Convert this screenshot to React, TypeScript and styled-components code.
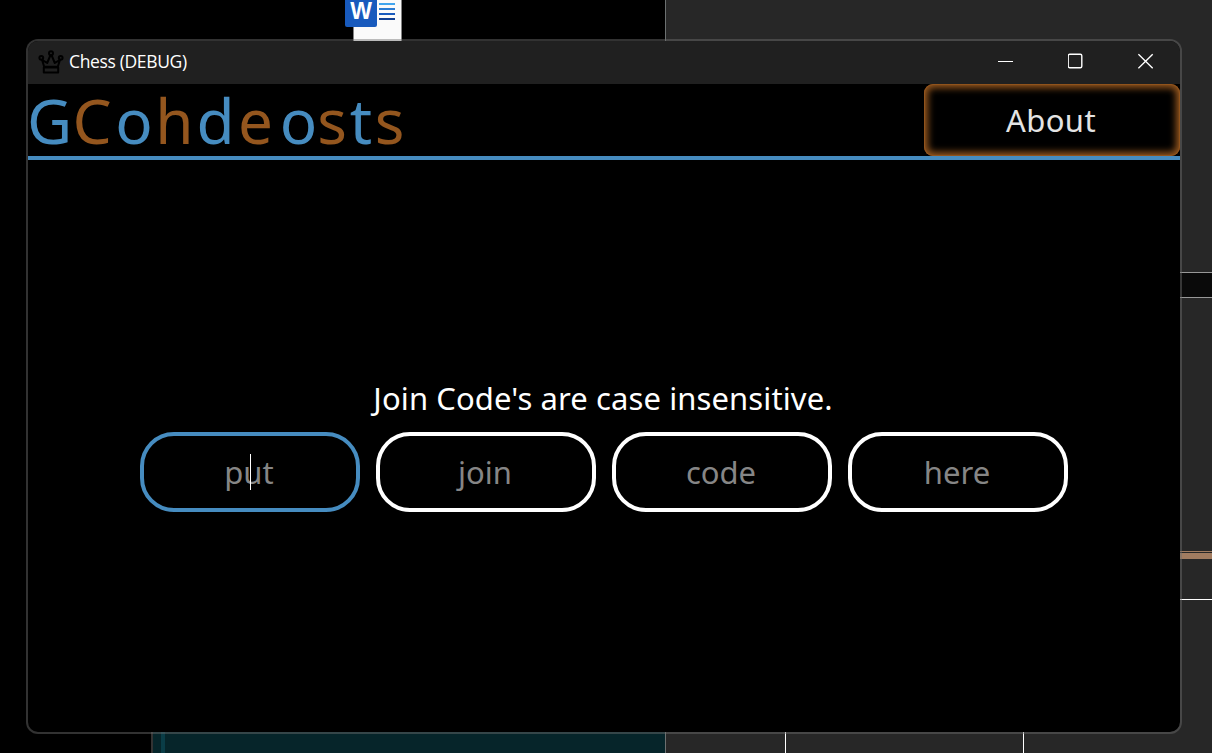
import React from 'react';
import styled, { createGlobalStyle } from 'styled-components';

const BLUE = '#468cc0';
const BROWN = '#94561e';

const Global = createGlobalStyle`
  * { box-sizing: border-box; }
  body { margin: 0; background: #000; overflow: hidden; }
`;

const Desktop = styled.div`
  position: relative;
  display: flex;
  width: 1212px;
  height: 753px;
  background: #000;
  overflow: hidden;
`;

const LeftScreen = styled.div`
  display: flex;
  flex-direction: column;
  justify-content: space-between;
  width: 665px;
`;

const WordFile = styled.svg`
  display: block;
  margin-left: 345px;
`;

const TealPanel = styled.div`
  display: flex;
  height: 24px;
  margin-left: 151px;
  padding-left: 8px;
  border-left: 2px solid #333;
  background: #06252a;
`;

const TealStripe = styled.div`
  width: 4px;
  background: #0a3d47;
`;

const RightScreen = styled.div`
  flex: 1;
  display: flex;
  flex-direction: column;
  background: #272727;
  border-left: 1px solid #6c7070;
`;

const Spacer = styled.div<{ $h: number }>`
  height: ${(p) => p.$h}px;
`;

const DarkBand = styled.div`
  height: 26px;
  background: #0a0a0a;
  border-top: 1px solid #989898;
  border-bottom: 1px solid #989898;
`;

const Rule = styled.div<{ $h: number; $color: string }>`
  height: ${(p) => p.$h}px;
  background: ${(p) => p.$color};
`;

const Columns = styled.div`
  flex: 1;
  display: grid;
  grid-template-columns: 120px 238px 1fr;
`;

const Column = styled.div<{ $line?: boolean }>`
  border-right: ${(p) => (p.$line ? '1px solid #fff' : 'none')};
`;

const Window = styled.main`
  position: absolute;
  left: 26px;
  top: 39px;
  width: 1156px;
  height: 695px;
  display: flex;
  flex-direction: column;
  border: 2px solid rgba(110, 110, 110, 0.45);
  border-radius: 12px;
  background: #000;
  background-clip: padding-box;
  overflow: hidden;
`;

const TitleBar = styled.div`
  display: flex;
  align-items: center;
  height: 43px;
  padding: 0 0 3px 10px;
  background: #202020;
`;

const CrownIcon = styled.svg`
  margin-top: 2px;
`;

const Title = styled.span`
  flex: 1;
  margin-left: 5px;
  color: #fff;
  font: 17.5px/24px 'Open Sans', sans-serif;
  letter-spacing: -0.35px;
  white-space: nowrap;
`;

const Controls = styled.div`
  display: flex;
  gap: 54px;
  margin-right: 26px;
`;

const Header = styled.header`
  display: flex;
  justify-content: space-between;
  height: 76px;
  border-bottom: 4px solid ${BLUE};
`;

const Logo = styled.div`
  display: flex;
  font: 62px/72px 'Noto Sans', sans-serif;
`;

const Letter = styled.span<{ $w: number; $alt: boolean }>`
  display: flex;
  justify-content: center;
  width: ${(p) => p.$w}px;
  color: ${(p) => (p.$alt ? BROWN : BLUE)};
`;

const AboutButton = styled.button`
  width: 256px;
  height: 72px;
  padding: 0 2px 0 0;
  border: 0;
  border-radius: 9px;
  background: #000;
  box-shadow: inset 0 0 7px 4px ${BROWN}, inset 0 0 1px 1px ${BROWN};
  color: #e4e4e4;
  font: 31px/72px 'Noto Sans', sans-serif;
  letter-spacing: 0.4px;
`;

const Body = styled.section`
  flex: 1;
  display: flex;
  flex-direction: column;
  align-items: flex-start;
  padding: 215px 0 0 112px;
`;

const Hint = styled.div`
  width: 926px;
  height: 57px;
  color: #fff;
  text-align: center;
  font: 31px/46px 'Noto Sans', sans-serif;
  letter-spacing: 0.1px;
  white-space: nowrap;
`;

const Fields = styled.div`
  display: flex;
  gap: 16px;
`;

const Field = styled.div<{ $active?: boolean }>`
  position: relative;
  display: flex;
  justify-content: center;
  width: 220px;
  height: 80px;
  padding-right: 2px;
  border: 4px solid ${(p) => (p.$active ? BLUE : '#fff')};
  border-radius: 34px;
  color: #868686;
  font: 31px/73px 'Noto Sans', sans-serif;
`;

const Caret = styled.i`
  position: absolute;
  left: 106px;
  top: 18px;
  width: 1px;
  height: 36px;
  background: #fff;
`;

const letters: [string, number][] = [
  ['G', 41], ['C', 44], ['o', 40], ['h', 41], ['d', 41],
  ['e', 39], ['o', 47], ['s', 20], ['t', 38], ['s', 19],
];

const LogoInset = styled.div`
  padding-left: 1px;
`;

const words = ['put', 'join', 'code', 'here'];

const WordIcon = () => (
  <WordFile width="57" height="42" viewBox="0 0 57 42">
    <rect x="8.5" y="-5" width="48" height="50" fill="#fafafa" stroke="#888" strokeWidth="0.6" />
    <rect x="34" y="3" width="16" height="2" fill="#41a5ee" />
    <rect x="34" y="8" width="16" height="2" fill="#2b7cd3" />
    <rect x="34" y="13" width="16" height="2" fill="#185abd" />
    <rect x="34" y="18" width="16" height="2" fill="#103f91" />
    <rect x="0" y="-6" width="32" height="33" rx="2" fill="#185abd" />
    <text x="16" y="19" textAnchor="middle" fill="#fff" fontFamily="Liberation Sans, sans-serif" fontWeight="700" fontSize="23">W</text>
  </WordFile>
);

const Crown = () => (
  <CrownIcon width="26" height="26" viewBox="0 0 26 26" fill="none" stroke="#000" strokeWidth="2" strokeLinejoin="round">
    <circle cx="3.3" cy="8.8" r="1.9" />
    <circle cx="13" cy="4.3" r="2" />
    <circle cx="22.7" cy="8.8" r="1.9" />
    <path d="M4 10.8 6.2 17.8H19.8L22 10.8 16.8 14 13.7 6.5H12.3L9.2 14Z" />
    <path d="M5.8 18.6H20.2V23.4H5.8Z" />
  </CrownIcon>
);

export default function App() {
  return (
    <>
      <Global />
      <Desktop>
        <LeftScreen>
          <WordIcon />
          <TealPanel><TealStripe /></TealPanel>
        </LeftScreen>
        <RightScreen>
          <Spacer $h={272} />
          <DarkBand />
          <Spacer $h={253} />
          <Rule $h={1} $color="#a27c60" />
          <Spacer $h={1} />
          <Rule $h={6} $color="#a27c60" />
          <Spacer $h={40} />
          <Rule $h={1} $color="#fff" />
          <Columns>
            <Column $line />
            <Column $line />
            <Column />
          </Columns>
        </RightScreen>
        <Window>
          <TitleBar>
            <Crown />
            <Title>Chess (DEBUG)</Title>
            <Controls>
              <svg width="16" height="16" stroke="#fff"><path d="M0 8.5H15" /></svg>
              <svg width="16" height="16" fill="none" stroke="#fff" strokeWidth="1.4"><rect x="-0.3" y="1.2" width="13.6" height="13.6" rx="1.5" transform="translate(0.5 0)" /></svg>
              <svg width="16" height="16" fill="none" stroke="#fff" strokeWidth="1.4"><path d="M0.4 1.2 14.7 15.3M14.7 1.2 0.4 15.3" /></svg>
            </Controls>
          </TitleBar>
          <Header>
            <LogoInset>
              <Logo>
                {letters.map(([ch, w], i) => (
                  <Letter key={i} $w={w} $alt={i % 2 === 1}>{ch}</Letter>
                ))}
              </Logo>
            </LogoInset>
            <AboutButton>About</AboutButton>
          </Header>
          <Body>
            <Hint>Join Code's are case insensitive.</Hint>
            <Fields>
              {words.map((w, i) => (
                <Field key={w} $active={i === 0}>
                  {w}
                  {i === 0 && <Caret />}
                </Field>
              ))}
            </Fields>
          </Body>
        </Window>
      </Desktop>
    </>
  );
}
